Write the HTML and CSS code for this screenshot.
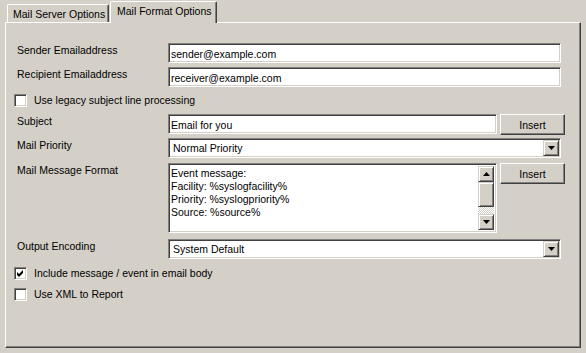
FILE: index.html
```html
<!DOCTYPE html>
<html lang="en">
<head>
    <meta charset="UTF-8">
    <title>Mail Format Options</title>
    <link rel="stylesheet" href="styles.css">
</head>
<body>

<div class="dialog">
    <div class="tabs">
        <div class="tab">Mail Server Options</div>
        <div class="tab active">Mail Format Options</div>
    </div>

    <div class="panel">
        <div class="row">
            <label class="lbl">Sender Emailaddress</label>
            <div class="field wide">sender@example.com</div>
        </div>

        <div class="row row-recipient">
            <label class="lbl">Recipient Emailaddress</label>
            <div class="field wide">receiver@example.com</div>
        </div>

        <div class="checkrow row-legacy">
            <span class="check"></span>
            <span>Use legacy subject line processing</span>
        </div>

        <div class="row row-subject">
            <label class="lbl">Subject</label>
            <div class="field">Email for you</div>
            <button class="btn">Insert</button>
        </div>

        <div class="row row-priority">
            <label class="lbl">Mail Priority</label>
            <div class="field wide combo">
                <span class="combo-text">Normal Priority</span>
                <span class="drop"><svg width="7" height="4" viewBox="0 0 7 4"><polygon points="0,0 7,0 3.5,4" fill="#000"/></svg></span>
            </div>
        </div>

        <div class="row row-message">
            <label class="lbl">Mail Message Format</label>
            <div class="field memo">
                <div class="memo-text">
                    Event message:<br>
                    Facility: %syslogfacility%<br>
                    Priority: %syslogpriority%<br>
                    Source: %source%
                </div>
                <div class="vscroll">
                    <span class="sbtn"><svg width="7" height="4" viewBox="0 0 7 4"><polygon points="3.5,0 7,4 0,4" fill="#000"/></svg></span>
                    <span class="thumb"></span>
                    <span class="track"></span>
                    <span class="sbtn"><svg width="7" height="4" viewBox="0 0 7 4"><polygon points="0,0 7,0 3.5,4" fill="#000"/></svg></span>
                </div>
            </div>
            <button class="btn">Insert</button>
        </div>

        <div class="row row-encoding">
            <label class="lbl">Output Encoding</label>
            <div class="field wide combo">
                <span class="combo-text">System Default</span>
                <span class="drop"><svg width="7" height="4" viewBox="0 0 7 4"><polygon points="0,0 7,0 3.5,4" fill="#000"/></svg></span>
            </div>
        </div>

        <div class="checkrow row-include">
            <span class="check"><svg width="7" height="7" viewBox="0 0 7 7"><path d="M0 2 L2 4 L6 0 L6 3 L2 7 L0 5 Z" fill="#000"/></svg></span>
            <span>Include message / event in email body</span>
        </div>

        <div class="checkrow row-xml">
            <span class="check"></span>
            <span>Use XML to Report</span>
        </div>
    </div>
</div>

</body>
</html>
```

FILE: styles.css
```css
body {
    margin: 0;
    background: #d4d0c8;
    font-family: "Liberation Sans", Arial, sans-serif;
    font-size: 10.5px;
    color: #000;
}
.dialog {
    width: 586px;
    height: 353px;
}
.tabs {
    display: flex;
    align-items: flex-end;
    height: 22px;
    padding-left: 7px;
    box-sizing: border-box;
}
.tab {
    width: 102px;
    height: 18px;
    box-sizing: border-box;
    border-left: 1px solid #fff;
    border-top: 1px solid #fff;
    border-right: 1px solid #404040;
    border-radius: 2px 2px 0 0;
    box-shadow: inset -1px 0 #808080;
    padding: 3px 0 0 5px;
    line-height: 13px;
    margin-right: 1px;
    white-space: nowrap;
}
.tab.active {
    width: 107px;
    height: 22px;
    margin-bottom: -1px;
    padding: 3px 0 0 6px;
    background: #d4d0c8;
    position: relative;
    z-index: 1;
}
.panel {
    margin-left: 5px;
    width: 576px;
    height: 326px;
    box-sizing: border-box;
    border: 1px solid;
    border-color: #fff #404040 #404040 #fff;
    box-shadow: inset -1px -1px #808080;
    padding: 20px 0 0 8px;
}
.row {
    display: grid;
    grid-template-columns: 151px 329px 65px;
    column-gap: 3px;
    align-items: start;
}
.lbl {
    padding: 1px 0 0 3px;
    line-height: 13px;
    white-space: nowrap;
}
.row-recipient { margin-top: 4px; }
.row-legacy { margin-top: 7px; }
.row-subject { margin-top: 7px; }
.row-priority { margin-top: 3px; }
.row-message { margin-top: 5px; }
.row-encoding { margin-top: 6px; }
.row-include { margin-top: 8px; }
.row-xml { margin-top: 8px; }

.field {
    height: 20px;
    box-sizing: border-box;
    background: #fff;
    border: 1px solid;
    border-color: #808080 #fff #fff #808080;
    box-shadow: inset 1px 1px #404040, inset -1px -1px #d4d0c8;
    padding: 2px 2px 0 2px;
    line-height: 16px;
    white-space: nowrap;
}
.field.wide {
    grid-column: 2 / 4;
    width: 393px;
}
.combo {
    display: flex;
    align-items: center;
    padding: 1px 1px 1px 4px;
}
.combo-text {
    flex: 1;
}
.drop, .sbtn {
    width: 16px;
    height: 16px;
    box-sizing: border-box;
    display: flex;
    align-items: center;
    justify-content: center;
    background: #d4d0c8;
    border: 1px solid;
    border-color: #d4d0c8 #404040 #404040 #d4d0c8;
    box-shadow: inset 1px 1px #fff, inset -1px -1px #808080;
}
.memo {
    height: 70px;
    display: flex;
    padding: 2px;
}
.memo-text {
    flex: 1;
    line-height: 13px;
    padding-top: 1px;
}
.vscroll {
    width: 16px;
    display: flex;
    flex-direction: column;
}
.thumb {
    height: 25px;
    box-sizing: border-box;
    background: #d4d0c8;
    border: 1px solid;
    border-color: #d4d0c8 #404040 #404040 #d4d0c8;
    box-shadow: inset 1px 1px #fff, inset -1px -1px #808080;
}
.track {
    flex: 1;
    background: repeating-conic-gradient(#fff 0 25%, #d4d0c8 0 50%) 0 0 / 2px 2px;
}
.btn {
    height: 21px;
    box-sizing: border-box;
    background: #d4d0c8;
    border: 1px solid;
    border-color: #fff #404040 #404040 #fff;
    box-shadow: inset -1px -1px #808080;
    font: inherit;
    color: #000;
    padding: 0;
}
.checkrow {
    display: flex;
    align-items: center;
    gap: 7px;
    height: 13px;
    line-height: 13px;
}
.check {
    width: 13px;
    height: 13px;
    box-sizing: border-box;
    background: #fff;
    border: 1px solid;
    border-color: #808080 #fff #fff #808080;
    box-shadow: inset 1px 1px #404040, inset -1px -1px #d4d0c8;
    display: flex;
    align-items: center;
    justify-content: center;
}
```
